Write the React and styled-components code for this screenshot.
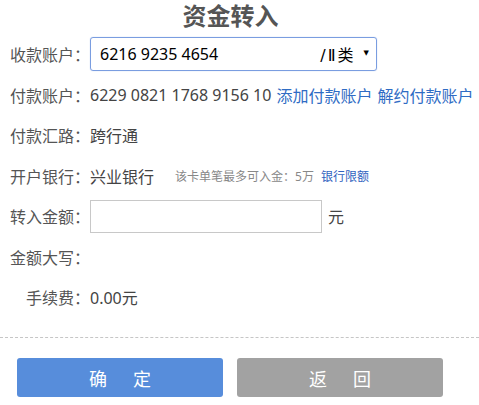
import React from 'react';
import styled, { createGlobalStyle } from 'styled-components';

const GlobalStyle = createGlobalStyle`
    html, body {
        margin: 0;
        padding: 0;
        background: #ffffff;
    }
    body {
        font-family: "Noto Sans", "Noto Sans CJK SC", sans-serif;
        color: #444;
    }
`;

const Page = styled.div`
    width: 479px;
    height: 405px;
    overflow: hidden;
`;

const Title = styled.h2`
    width: 461px;
    margin: 0;
    height: 37px;
    line-height: 32px;
    text-align: center;
    font-size: 24px;
    font-weight: bold;
    color: #555;
`;

const Form = styled.div`
    display: flex;
    flex-direction: column;
    gap: 6.5px;
`;

const Row = styled.div`
    display: flex;
    align-items: center;
    height: 34px;
    font-size: 16px;
`;

const Label = styled.span`
    width: 80px;
    margin-left: 10px;
    text-align: right;
    color: #555;
    white-space: nowrap;
    flex-shrink: 0;
`;

const Value = styled.span`
    color: #444;
    white-space: nowrap;
`;

const Link = styled.a`
    color: ${p => (p.$small ? '#3163c0' : '#2f6cc4')};
    font-size: ${p => (p.$small ? '12px' : '16px')};
    margin-left: ${p => p.$gap || 0}px;
    text-decoration: none;
    white-space: nowrap;
    cursor: pointer;
`;

const Hint = styled.span`
    font-size: 12px;
    color: #888;
    margin-left: 21px;
    white-space: nowrap;
`;

const Select = styled.div`
    display: flex;
    align-items: center;
    box-sizing: border-box;
    width: 287px;
    height: 34px;
    padding: 0 7px 0 9px;
    border: 1px solid #7a9de0;
    border-radius: 3px;
    box-shadow: 0 0 1px #9db6e8;
    color: #000;
`;

const SelectText = styled.span`
    flex: 1;
    white-space: nowrap;
`;

const SelectType = styled.span`
    font-family: "DejaVu Sans", "Noto Sans CJK SC", sans-serif;
    white-space: nowrap;
    letter-spacing: 2px;
    margin-right: 8px;
`;

const Arrow = styled.span`
    font-family: "DejaVu Sans", sans-serif;
    font-size: 7px;
    line-height: 1;
    margin-top: -2px;
    color: #000;
`;

const Input = styled.input`
    box-sizing: border-box;
    width: 232px;
    height: 33px;
    border: 1px solid #c8c8c8;
    border-radius: 0;
    padding: 0 6px;
    font-size: 16px;
    font-family: inherit;
    outline: none;
`;

const Unit = styled.span`
    margin-left: 6px;
    color: #444;
`;

const Divider = styled.div`
    margin-top: 23px;
    border-top: 1px dashed #c6c6c6;
`;

const Buttons = styled.div`
    display: flex;
    gap: 14px;
    padding: 20px 0 0 17px;
`;

const Button = styled.button`
    width: 206px;
    height: 39px;
    border: none;
    border-radius: 3px;
    background: ${p => (p.$primary ? '#578ddb' : '#a2a2a2')};
    color: #fff;
    font-size: 18px;
    font-family: inherit;
    letter-spacing: 26px;
    padding: 0 0 0 26px;
    cursor: pointer;
`;

export default function App() {
    return (
        <Page>
            <GlobalStyle />
            <Title>资金转入</Title>
            <Form>
                <Row>
                    <Label>收款账户：</Label>
                    <Select>
                        <SelectText>6216 9235 4654</SelectText>
                        <SelectType>/Ⅱ类</SelectType>
                        <Arrow>▼</Arrow>
                    </Select>
                </Row>
                <Row>
                    <Label>付款账户：</Label>
                    <Value>6229 0821 1768 9156 10</Value>
                    <Link $gap={5}>添加付款账户</Link>
                    <Link $gap={5}>解约付款账户</Link>
                </Row>
                <Row>
                    <Label>付款汇路：</Label>
                    <Value>跨行通</Value>
                </Row>
                <Row>
                    <Label>开户银行：</Label>
                    <Value>兴业银行</Value>
                    <Hint>该卡单笔最多可入金：5万</Hint>
                    <Link $small $gap={7}>银行限额</Link>
                </Row>
                <Row>
                    <Label>转入金额：</Label>
                    <Input type="text" />
                    <Unit>元</Unit>
                </Row>
                <Row>
                    <Label>金额大写：</Label>
                </Row>
                <Row>
                    <Label>手续费：</Label>
                    <Value>0.00元</Value>
                </Row>
            </Form>
            <Divider />
            <Buttons>
                <Button $primary>确定</Button>
                <Button>返回</Button>
            </Buttons>
        </Page>
    );
}
